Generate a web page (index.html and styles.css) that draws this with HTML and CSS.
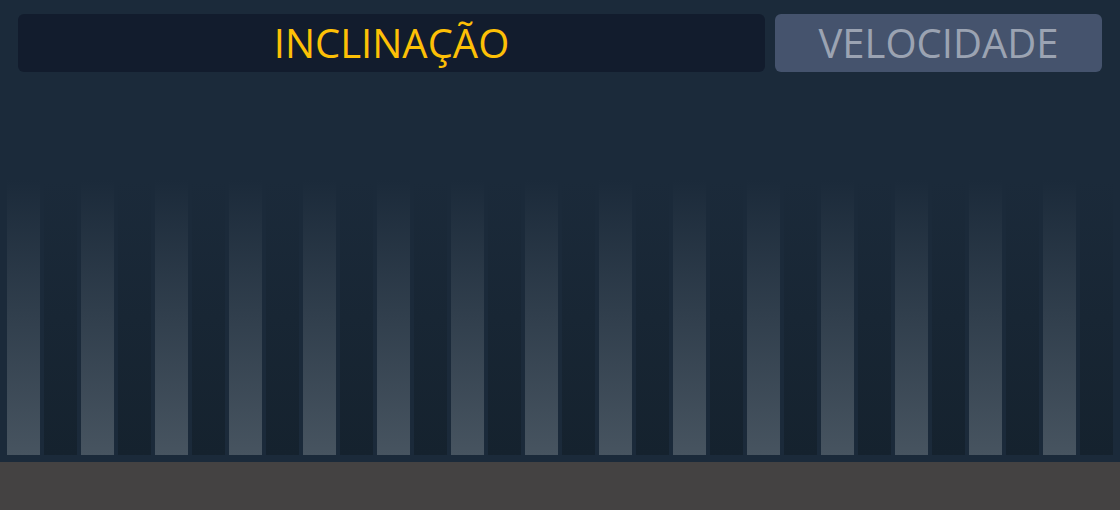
FILE: index.html
```html
<!DOCTYPE html>
<html lang="pt">
<head>
<meta charset="utf-8">
<link rel="stylesheet" href="styles.css">
</head>
<body>
<div class="app">
  <div class="tabs">
    <div class="tab tab-active">INCLINAÇÃO</div>
    <div class="tab tab-inactive">VELOCIDADE</div>
  </div>
  <div class="chart">
    <div class="bar light"></div><div class="bar dark"></div>
    <div class="bar light"></div><div class="bar dark"></div>
    <div class="bar light"></div><div class="bar dark"></div>
    <div class="bar light"></div><div class="bar dark"></div>
    <div class="bar light"></div><div class="bar dark"></div>
    <div class="bar light"></div><div class="bar dark"></div>
    <div class="bar light"></div><div class="bar dark"></div>
    <div class="bar light"></div><div class="bar dark"></div>
    <div class="bar light"></div><div class="bar dark"></div>
    <div class="bar light"></div><div class="bar dark"></div>
    <div class="bar light"></div><div class="bar dark"></div>
    <div class="bar light"></div><div class="bar dark"></div>
    <div class="bar light"></div><div class="bar dark"></div>
    <div class="bar light"></div><div class="bar dark"></div>
    <div class="bar light"></div><div class="bar dark"></div>
  </div>
  <div class="footer"></div>
</div>
</body>
</html>
```
FILE: styles.css
```css
html, body {
  margin: 0;
  padding: 0;
}
body {
  background: #1b2a3a;
  font-family: "Open Sans", "Liberation Sans", sans-serif;
}
.app {
  width: 1120px;
  height: 510px;
  display: flex;
  flex-direction: column;
}
.tabs {
  display: flex;
  gap: 10px;
  padding: 14px 18px 0 18px;
}
.tab {
  height: 58px;
  border-radius: 6px;
  display: flex;
  align-items: center;
  justify-content: center;
  font-size: 40px;
  line-height: 1;
}
.tab-active {
  width: 747px;
  background: #121c2d;
  color: #fdc006;
}
.tab-inactive {
  flex: 1;
  background: #45536d;
  color: #9ba3b2;
}
.chart {
  margin-top: 108px;
  height: 275px;
  display: flex;
  gap: 4px;
  padding-left: 7px;
}
.bar {
  width: 33px;
  height: 100%;
}
.light {
  background: linear-gradient(to bottom, #1b2a3a 0%, #475460 100%);
}
.dark {
  background: linear-gradient(to bottom, #1b2a3a 0%, #15222e 100%);
}
.footer {
  margin-top: 7px;
  flex: 1;
  background: #444242;
}
```
